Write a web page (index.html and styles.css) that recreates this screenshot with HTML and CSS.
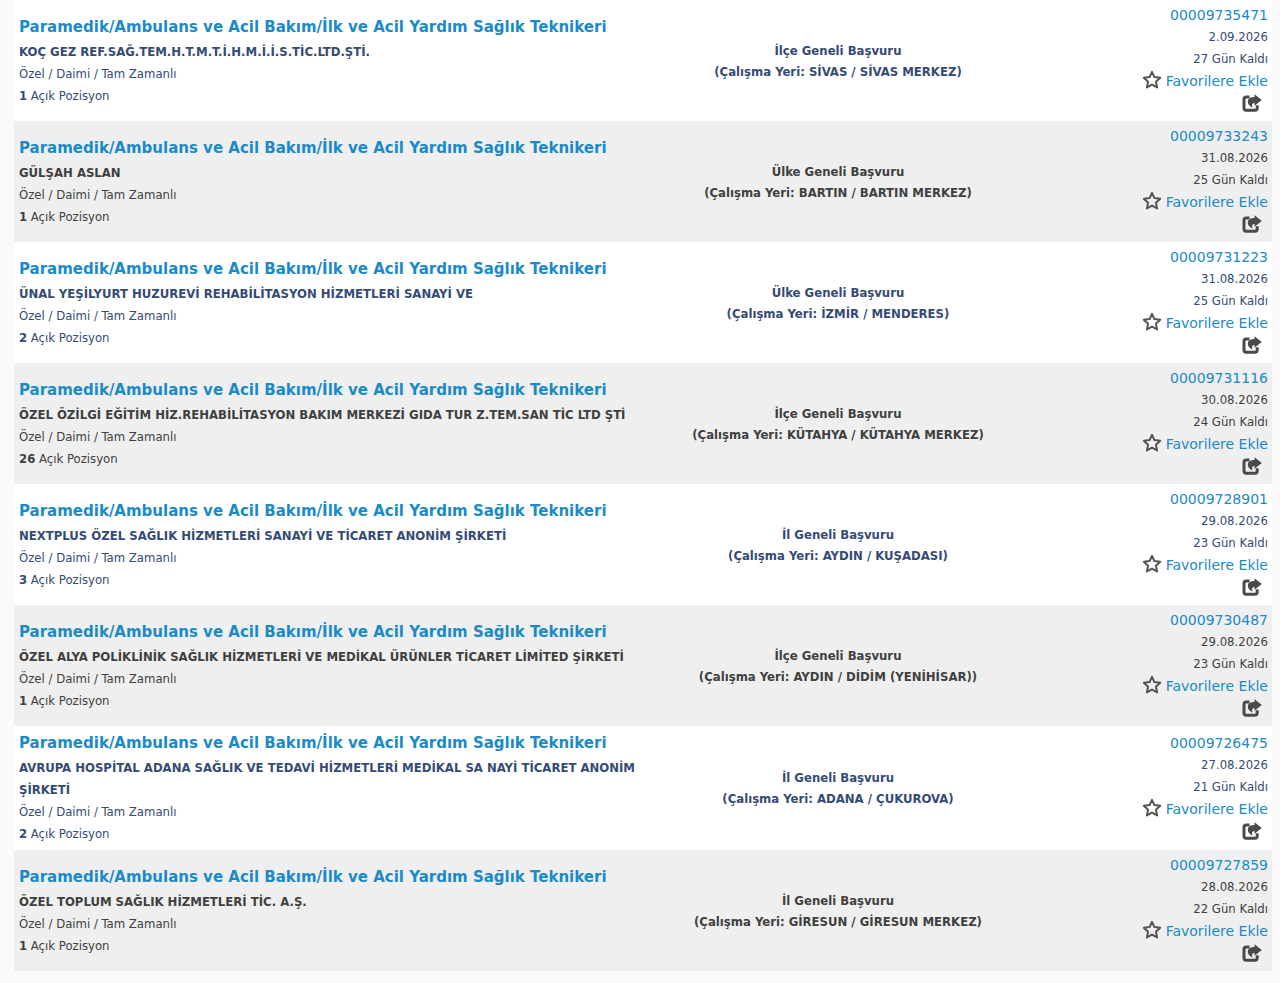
FILE: index.html
```html
<!DOCTYPE html>
<html lang="tr">
<head>
    <meta charset="UTF-8">
    <meta name="viewport" content="width=device-width, initial-scale=1.0">
    <title>Açık İş İlanları</title>
    <link rel="stylesheet" href="styles.css">
</head>
<body>
    <svg class="icon-defs" aria-hidden="true">
        <symbol id="star" viewBox="0 0 20 20">
            <path d="M10 1.800l2.400 5.300 5.800.7-4.300 3.900 1.200 5.700-5.100-2.800-5.100 2.800 1.200-5.700-4.300-3.900 5.800-.7z" fill="none" stroke="#555" stroke-width="2" stroke-linejoin="round"/>
        </symbol>
        <symbol id="share" viewBox="0 0 20 18">
            <path d="M7.500 3H4.200Q2 3 2 5.200v8.800q0 2.200 2.200 2.200h8.800q2.200 0 2.200-2.200v-2.800" fill="none" stroke="#4a4a4a" stroke-width="3"/>
            <path d="M12.500 .3l7.300 5.700-7.300 5.700V9c-2.200 0-3 1.500-2 4.700C7.200 12 5.500 9.800 5.800 7.300 6.200 4.300 9 3 12.500 3z" fill="#4a4a4a"/>
        </symbol>
    </svg>

    <table class="job-list">
        <colgroup>
            <col class="col-job">
            <col class="col-place">
            <col class="col-info">
        </colgroup>
        <tbody>
            <tr>
                <td>
                    <a href="#" class="job-title">Paramedik/Ambulans ve Acil Bakım/İlk ve Acil Yardım Sağlık Teknikeri</a>
                    <div class="company">KOÇ GEZ REF.SAĞ.TEM.H.T.M.T.İ.H.M.İ.İ.S.TİC.LTD.ŞTİ.</div>
                    <div>Özel / Daimi / Tam Zamanlı</div>
                    <div><b>1</b> Açık Pozisyon</div>
                </td>
                <td class="place">İlçe Geneli Başvuru<br>(Çalışma Yeri: SİVAS / SİVAS MERKEZ)</td>
                <td class="info">
                    <a href="#" class="job-no">00009735471</a>
                    <div>2.09.2026</div>
                    <div>27 Gün Kaldı</div>
                    <a href="#" class="favorite"><svg class="star"><use href="#star"/></svg>Favorilere Ekle</a>
                    <button type="button" class="share-btn" aria-label="Paylaş"><svg><use href="#share"/></svg></button>
                </td>
            </tr>
            <tr>
                <td>
                    <a href="#" class="job-title">Paramedik/Ambulans ve Acil Bakım/İlk ve Acil Yardım Sağlık Teknikeri</a>
                    <div class="company">GÜLŞAH ASLAN</div>
                    <div>Özel / Daimi / Tam Zamanlı</div>
                    <div><b>1</b> Açık Pozisyon</div>
                </td>
                <td class="place">Ülke Geneli Başvuru<br>(Çalışma Yeri: BARTIN / BARTIN MERKEZ)</td>
                <td class="info">
                    <a href="#" class="job-no">00009733243</a>
                    <div>31.08.2026</div>
                    <div>25 Gün Kaldı</div>
                    <a href="#" class="favorite"><svg class="star"><use href="#star"/></svg>Favorilere Ekle</a>
                    <button type="button" class="share-btn" aria-label="Paylaş"><svg><use href="#share"/></svg></button>
                </td>
            </tr>
            <tr>
                <td>
                    <a href="#" class="job-title">Paramedik/Ambulans ve Acil Bakım/İlk ve Acil Yardım Sağlık Teknikeri</a>
                    <div class="company">ÜNAL YEŞİLYURT HUZUREVİ REHABİLİTASYON HİZMETLERİ SANAYİ VE</div>
                    <div>Özel / Daimi / Tam Zamanlı</div>
                    <div><b>2</b> Açık Pozisyon</div>
                </td>
                <td class="place">Ülke Geneli Başvuru<br>(Çalışma Yeri: İZMİR / MENDERES)</td>
                <td class="info">
                    <a href="#" class="job-no">00009731223</a>
                    <div>31.08.2026</div>
                    <div>25 Gün Kaldı</div>
                    <a href="#" class="favorite"><svg class="star"><use href="#star"/></svg>Favorilere Ekle</a>
                    <button type="button" class="share-btn" aria-label="Paylaş"><svg><use href="#share"/></svg></button>
                </td>
            </tr>
            <tr>
                <td>
                    <a href="#" class="job-title">Paramedik/Ambulans ve Acil Bakım/İlk ve Acil Yardım Sağlık Teknikeri</a>
                    <div class="company">ÖZEL ÖZİLGİ EĞİTİM HİZ.REHABİLİTASYON BAKIM MERKEZİ GIDA TUR Z.TEM.SAN TİC LTD ŞTİ</div>
                    <div>Özel / Daimi / Tam Zamanlı</div>
                    <div><b>26</b> Açık Pozisyon</div>
                </td>
                <td class="place">İlçe Geneli Başvuru<br>(Çalışma Yeri: KÜTAHYA / KÜTAHYA MERKEZ)</td>
                <td class="info">
                    <a href="#" class="job-no">00009731116</a>
                    <div>30.08.2026</div>
                    <div>24 Gün Kaldı</div>
                    <a href="#" class="favorite"><svg class="star"><use href="#star"/></svg>Favorilere Ekle</a>
                    <button type="button" class="share-btn" aria-label="Paylaş"><svg><use href="#share"/></svg></button>
                </td>
            </tr>
            <tr>
                <td>
                    <a href="#" class="job-title">Paramedik/Ambulans ve Acil Bakım/İlk ve Acil Yardım Sağlık Teknikeri</a>
                    <div class="company">NEXTPLUS ÖZEL SAĞLIK HİZMETLERİ SANAYİ VE TİCARET ANONİM ŞİRKETİ</div>
                    <div>Özel / Daimi / Tam Zamanlı</div>
                    <div><b>3</b> Açık Pozisyon</div>
                </td>
                <td class="place">İl Geneli Başvuru<br>(Çalışma Yeri: AYDIN / KUŞADASI)</td>
                <td class="info">
                    <a href="#" class="job-no">00009728901</a>
                    <div>29.08.2026</div>
                    <div>23 Gün Kaldı</div>
                    <a href="#" class="favorite"><svg class="star"><use href="#star"/></svg>Favorilere Ekle</a>
                    <button type="button" class="share-btn" aria-label="Paylaş"><svg><use href="#share"/></svg></button>
                </td>
            </tr>
            <tr>
                <td>
                    <a href="#" class="job-title">Paramedik/Ambulans ve Acil Bakım/İlk ve Acil Yardım Sağlık Teknikeri</a>
                    <div class="company">ÖZEL ALYA POLİKLİNİK SAĞLIK HİZMETLERİ VE MEDİKAL ÜRÜNLER TİCARET LİMİTED ŞİRKETİ</div>
                    <div>Özel / Daimi / Tam Zamanlı</div>
                    <div><b>1</b> Açık Pozisyon</div>
                </td>
                <td class="place">İlçe Geneli Başvuru<br>(Çalışma Yeri: AYDIN / DİDİM (YENİHİSAR))</td>
                <td class="info">
                    <a href="#" class="job-no">00009730487</a>
                    <div>29.08.2026</div>
                    <div>23 Gün Kaldı</div>
                    <a href="#" class="favorite"><svg class="star"><use href="#star"/></svg>Favorilere Ekle</a>
                    <button type="button" class="share-btn" aria-label="Paylaş"><svg><use href="#share"/></svg></button>
                </td>
            </tr>
            <tr>
                <td>
                    <a href="#" class="job-title">Paramedik/Ambulans ve Acil Bakım/İlk ve Acil Yardım Sağlık Teknikeri</a>
                    <div class="company">AVRUPA HOSPİTAL ADANA SAĞLIK VE TEDAVİ HİZMETLERİ MEDİKAL SA NAYİ TİCARET ANONİM ŞİRKETİ</div>
                    <div>Özel / Daimi / Tam Zamanlı</div>
                    <div><b>2</b> Açık Pozisyon</div>
                </td>
                <td class="place">İl Geneli Başvuru<br>(Çalışma Yeri: ADANA / ÇUKUROVA)</td>
                <td class="info">
                    <a href="#" class="job-no">00009726475</a>
                    <div>27.08.2026</div>
                    <div>21 Gün Kaldı</div>
                    <a href="#" class="favorite"><svg class="star"><use href="#star"/></svg>Favorilere Ekle</a>
                    <button type="button" class="share-btn" aria-label="Paylaş"><svg><use href="#share"/></svg></button>
                </td>
            </tr>
            <tr>
                <td>
                    <a href="#" class="job-title">Paramedik/Ambulans ve Acil Bakım/İlk ve Acil Yardım Sağlık Teknikeri</a>
                    <div class="company">ÖZEL TOPLUM SAĞLIK HİZMETLERİ TİC. A.Ş.</div>
                    <div>Özel / Daimi / Tam Zamanlı</div>
                    <div><b>1</b> Açık Pozisyon</div>
                </td>
                <td class="place">İl Geneli Başvuru<br>(Çalışma Yeri: GİRESUN / GİRESUN MERKEZ)</td>
                <td class="info">
                    <a href="#" class="job-no">00009727859</a>
                    <div>28.08.2026</div>
                    <div>22 Gün Kaldı</div>
                    <a href="#" class="favorite"><svg class="star"><use href="#star"/></svg>Favorilere Ekle</a>
                    <button type="button" class="share-btn" aria-label="Paylaş"><svg><use href="#share"/></svg></button>
                </td>
            </tr>
        </tbody>
    </table>
</body>
</html>
```
FILE: styles.css
```css
body {
    margin: 0;
    padding: 0 8px 11px 14px;
    background-color: #fafafa;
    font-family: Tahoma, "DejaVu Sans Condensed", "DejaVu Sans", sans-serif;
    font-size: 13px;
    line-height: 22px;
}
.icon-defs {
    display: none;
}
.job-list {
    width: 100%;
    table-layout: fixed;
    border-collapse: collapse;
    color: #354b75;
}
.col-job {
    width: 52%;
}
.col-place {
    width: 27%;
}
.col-info {
    width: 21%;
}
.job-list tr {
    background-color: #fff;
}
.job-list tr:nth-child(even) {
    background-color: #efefef;
    color: #404040;
}
.job-list td {
    padding: 5px;
    vertical-align: middle;
}
.job-list a {
    display: block;
    color: #1a8ac9;
    text-decoration: none;
    font-family: Verdana, "DejaVu Sans", sans-serif;
    font-size: 14px;
}
.job-list a:hover {
    text-decoration: underline;
}
.job-list .job-title {
    margin-bottom: 2px;
    font-size: 15px;
    font-weight: bold;
    line-height: 24px;
}
.company {
    font-weight: bold;
}
.job-list .place {
    font-weight: bold;
    text-align: center;
    line-height: 21px;
}
.job-list .info {
    padding: 4px 4px 7px;
    text-align: right;
}
.job-list .favorite {
    display: flex;
    justify-content: flex-end;
    align-items: flex-start;
    gap: 4px;
}
.star {
    width: 20px;
    height: 20px;
}
.share-btn {
    display: flex;
    margin: 0 6px 0 auto;
    padding: 2px 0;
    border: none;
    background: none;
    cursor: pointer;
}
.share-btn svg {
    width: 20px;
    height: 18px;
}
```
